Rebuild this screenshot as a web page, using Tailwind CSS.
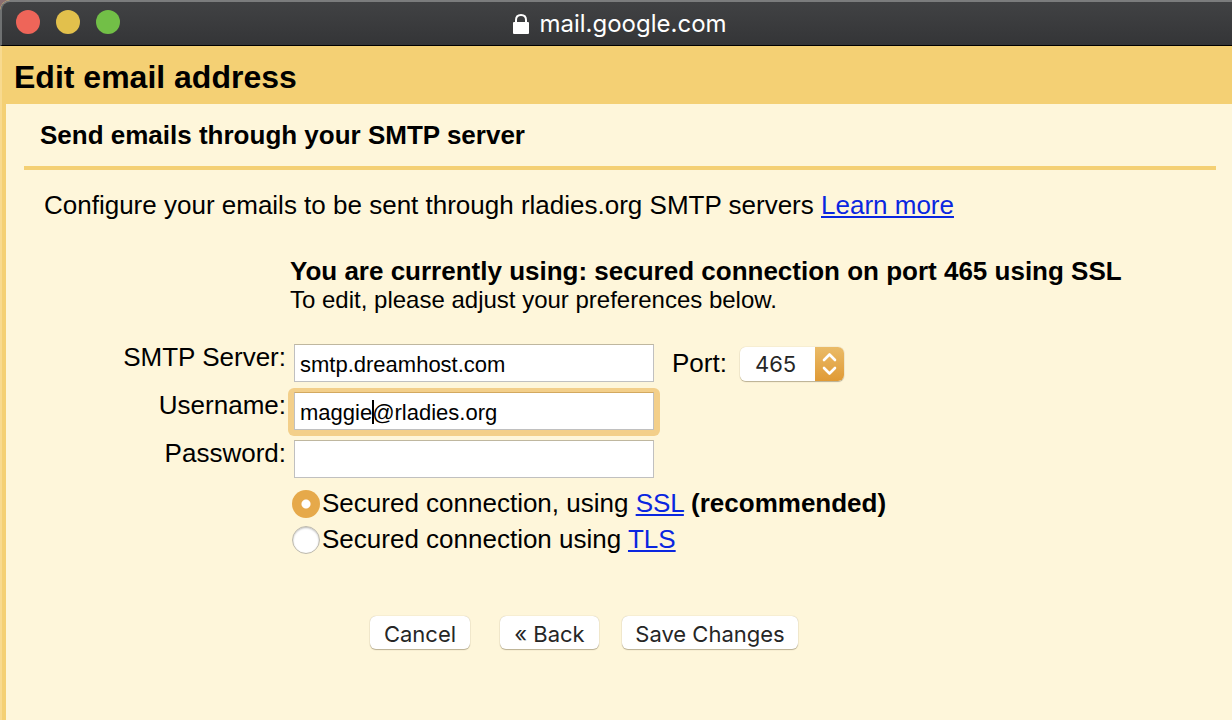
<!DOCTYPE html>
<html lang="en">
<head>
<meta charset="utf-8">
<meta name="viewport" content="width=device-width, initial-scale=1">
<title>Edit email address</title>
<script src="https://cdn.jsdelivr.net/npm/@tailwindcss/browser@4"></script>
</head>
<body class="bg-[#8b6f70] font-['Liberation_Sans',Arial,sans-serif] text-[26px] leading-[30px] text-black">
<div class="flex min-h-screen flex-col overflow-hidden rounded-tl-[10px] bg-[#f4d074]">
  <header class="grid h-[46px] grid-cols-[1fr_auto_1fr] items-center rounded-tl-[10px] border-t-2 border-l-2 border-b border-t-[#7b7c7d] border-l-[#6f7172] border-b-black bg-linear-to-b from-[#414244] to-[#343537] px-[14px]">
    <div class="flex gap-4 pb-[3px]">
      <button type="button" aria-label="Close" class="size-6 rounded-full bg-[#ee6559]"></button>
      <button type="button" aria-label="Minimize" class="size-6 rounded-full bg-[#e2c04c]"></button>
      <button type="button" aria-label="Zoom" class="size-6 rounded-full bg-[#72bf47]"></button>
    </div>
    <div class="flex items-center gap-[10px] pl-[6px] font-[Inter,sans-serif] text-[24px] text-white">
      <svg class="h-5 w-4" viewBox="0 0 16 20" fill="none" aria-hidden="true"><rect y="8" width="16" height="12" rx="1" fill="#fff"/><path d="M3 9V6C3 2.600 5 1 8 1s5 1.600 5 5v3" stroke="#fff" stroke-width="2"/></svg>
      <span>mail.google.com</span>
    </div>
  </header>
  <div class="flex flex-1 flex-col border-l-2 border-[#f8da8f]">
    <h1 class="px-3 pt-[13px] pb-[9px] text-[32px] leading-[36px] font-bold">Edit email address</h1>
    <main class="ml-1 flex-1 bg-[#fef6da] pr-4 pl-[18px]">
      <h2 class="border-b-4 border-[#f4d074] px-4 pt-4 pb-4 font-bold">Send emails through your SMTP server</h2>
      <p class="px-5 pt-5">Configure your emails to be sent through rladies.org SMTP servers <a href="#" class="text-[#0a26e0] underline decoration-2 underline-offset-2">Learn more</a></p>
      <form class="pt-9">
        <div class="pl-[266px]">
          <p class="font-bold">You are currently using: secured connection on port 465 using SSL</p>
          <p class="text-[24px] leading-7">To edit, please adjust your preferences below.</p>
        </div>
        <div class="grid grid-cols-[262px_1fr] gap-x-2 gap-y-[10px] pt-[30px]">
          <label for="server" class="text-right leading-[26px]">SMTP Server:</label>
          <div class="flex items-center">
            <input id="server" type="text" value="smtp.dreamhost.com" class="h-[38px] w-[360px] border border-[#c0c0c0] border-t-[#bfb79f] bg-white px-[5px] pt-1 text-[22px] outline-none">
            <label for="port" class="ml-[18px]">Port:</label>
            <div class="relative mt-[2px] ml-[13px] rounded-md shadow-[0_1px_1px_#b8ae92,0_0_1px_#b8ae92]">
              <select id="port" class="block h-[34px] w-[104px] appearance-none rounded-md bg-white pl-[15px] font-[Inter,sans-serif] text-[22px] text-[#262626] outline-none"><option>465</option><option>587</option><option>25</option></select>
              <svg class="pointer-events-none absolute top-0 right-0 h-[34px] w-[29px]" viewBox="0 0 29 34" fill="none" aria-hidden="true"><defs><linearGradient id="stepper" x2="0" y2="1"><stop stop-color="#eabb68"/><stop offset="1" stop-color="#e09a35"/></linearGradient></defs><path d="M0 0h23a6 6 0 0 1 6 6v22a6 6 0 0 1-6 6H0z" fill="url(#stepper)"/><path d="m9 13 5.500-5.500L20 13M9 21l5.500 5.500L20 21" stroke="#fff" stroke-width="2.600" stroke-linecap="round" stroke-linejoin="round"/></svg>
            </div>
          </div>
          <label for="user" class="text-right leading-[26px]">Username:</label>
          <div class="relative -mx-[6px] -mt-1 -mb-[6px] w-fit rounded-md bg-[#f3cf8a] px-[6px] pt-1 pb-[6px]">
            <input id="user" type="text" value="maggie@rladies.org" class="block h-[38px] w-[360px] border border-[#c0c0c0] border-t-[#d3a960] bg-white px-[5px] pt-1 text-[22px] outline-none">
            <span class="absolute top-3 left-[84px] h-6 w-0.5 bg-black"></span>
          </div>
          <label for="pass" class="text-right leading-[26px]">Password:</label>
          <input id="pass" type="password" class="h-[38px] w-[360px] border border-[#c0c0c0] border-t-[#bfb79f] bg-white px-[5px] text-[22px] outline-none">
        </div>
        <div class="flex flex-col gap-[6px] pt-[10px] pl-[268px]">
          <div class="flex items-center gap-0.5">
            <input id="ssl" type="radio" name="security" checked class="mt-[2px] size-7 appearance-none rounded-full bg-[#e6a94a] bg-radial from-white from-[4px] to-[#e6a94a] to-[5px]">
            <label for="ssl">Secured connection, using <a href="#" class="text-[#0a26e0] underline decoration-2 underline-offset-2">SSL</a> <b>(recommended)</b></label>
          </div>
          <div class="flex items-center gap-0.5">
            <input id="tls" type="radio" name="security" class="mt-[2px] size-7 appearance-none rounded-full border border-[#bdb9ac] bg-white shadow-[inset_0_1px_2px_#bbbbbb]">
            <label for="tls">Secured connection using <a href="#" class="text-[#0a26e0] underline decoration-2 underline-offset-2">TLS</a></label>
          </div>
        </div>
        <div class="flex pt-[62px] pl-[346px] font-[Inter,sans-serif] text-[22px] text-[#262626]">
          <button type="button" class="h-[33px] w-[100px] rounded-md bg-white pt-[2px] shadow-[0_1px_1px_#b8ae92,0_0_1px_#b8ae92]">Cancel</button>
          <button type="button" class="ml-[30px] h-[33px] w-[99px] rounded-md bg-white pt-[2px] shadow-[0_1px_1px_#b8ae92,0_0_1px_#b8ae92]">« Back</button>
          <button type="submit" class="ml-[23px] h-[33px] w-[176px] rounded-md bg-white pt-[2px] shadow-[0_1px_1px_#b8ae92,0_0_1px_#b8ae92]">Save Changes</button>
        </div>
      </form>
    </main>
  </div>
</div>
</body>
</html>
